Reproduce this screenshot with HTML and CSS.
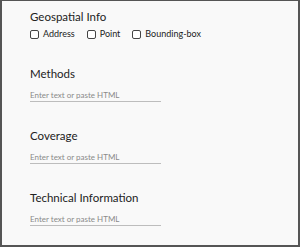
FILE: index.html
```html
<!DOCTYPE html>
<html lang="en">
<head>
    <meta charset="UTF-8">
    <meta name="viewport" content="width=device-width, initial-scale=1.0">
    <title>Metadata</title>
    <link rel="stylesheet" href="styles.css">
</head>
<body>
    <div class="panel">
        <div class="section">
            <h2 class="title">Geospatial Info</h2>
            <div class="checks">
                <label class="check"><span class="box"></span>Address</label>
                <label class="check"><span class="box"></span>Point</label>
                <label class="check"><span class="box"></span>Bounding-box</label>
            </div>
        </div>

        <div class="section">
            <h2 class="title">Methods</h2>
            <div class="field">Enter text or paste HTML</div>
        </div>

        <div class="section">
            <h2 class="title">Coverage</h2>
            <div class="field">Enter text or paste HTML</div>
        </div>

        <div class="section">
            <h2 class="title">Technical Information</h2>
            <div class="field">Enter text or paste HTML</div>
        </div>
    </div>
</body>
</html>
```

FILE: styles.css
```css
html, body {
    margin: 0;
    padding: 0;
    background-color: #f9f9f9;
}

.panel {
    box-sizing: border-box;
    width: 300px;
    height: 247px;
    border-style: solid;
    border-color: #555555;
    border-width: 1px 2px 2px 2px;
    background-color: #f9f9f9;
    padding: 8px 0 0 28px;
    font-family: Lato, "Open Sans", sans-serif;
    color: #222222;
}

.section {
    margin-bottom: 26px;
}

.title {
    margin: 0;
    font-size: 11.5px;
    font-weight: 400;
    line-height: 16px;
}

.checks {
    display: flex;
    margin-top: 3px;
    margin-bottom: 7px;
    font-size: 9px;
    line-height: 12px;
}

.check {
    display: flex;
    align-items: center;
    margin-right: 12px;
}

.box {
    box-sizing: border-box;
    width: 9px;
    height: 9px;
    border: 1px solid #444444;
    border-radius: 2px;
    margin-right: 4px;
    background-color: #ffffff;
}

.field {
    width: 131px;
    margin-top: 8px;
    font-size: 8px;
    line-height: 11px;
    color: #8a8a8a;
    border-bottom: 1px solid #bdbdbd;
}
```
